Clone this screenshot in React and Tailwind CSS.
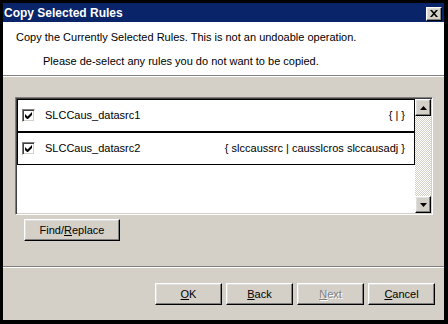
const raised =
  "border border-t-white border-l-white border-r-black border-b-black shadow-[inset_-1px_-1px_#808080,inset_1px_1px_#dfdfdf] bg-[#d4d0c8]";

const Btn = ({ children, disabled, className = "" }) => (
  <button
    className={`${raised} h-[22px] text-[11px] flex items-center justify-center ${
      disabled ? "text-[#808080] [text-shadow:1px_1px_#fff]" : "text-black"
    } ${className}`}
  >
    {children}
  </button>
);

const Check = () => (
  <span className="w-[13px] h-[13px] shrink-0 bg-white border border-t-[#808080] border-l-[#808080] border-r-white border-b-white shadow-[inset_1px_1px_#404040,inset_-1px_-1px_#d4d0c8] flex items-center justify-center">
    <svg width="7" height="7" viewBox="0 0 7 7">
      <path d="M0 2v3l2 2h1l4-4V0L2.5 4.5z" fill="#000" />
    </svg>
  </span>
);

const rules = [
  { name: "SLCCaus_datasrc1", expr: "{ | }" },
  { name: "SLCCaus_datasrc2", expr: "{ slccaussrc | causslcros slccausadj }" },
];

const Arrow = ({ up }) => (
  <span
    className={`${raised} h-[17px] w-full flex items-center justify-center shrink-0`}
  >
    <svg width="7" height="4" viewBox="0 0 7 4">
      <path d={up ? "M3.5 0L7 4H0z" : "M0 0h7L3.5 4z"} fill="#000" />
    </svg>
  </span>
);

export default function App() {
  return (
    <div className="w-[448px] h-[324px] bg-black pt-[3px] pl-[3px] pr-[4px] pb-[4px] flex flex-col font-['Liberation_Sans',Arial,sans-serif] text-[11px] text-black">
      {/* Title bar */}
      <div className="h-[19px] bg-[#0a246a] flex items-center justify-between pr-[2px] shrink-0">
        <span className="text-white font-bold text-[12px] pl-[1px] leading-none">
          Copy Selected Rules
        </span>
        <span className={`${raised} w-[16px] h-[14px] flex items-center justify-center mt-[2px]`}>
          <svg width="8" height="7" viewBox="0 0 8 7">
            <path d="M0 0h2l2 2.3L6 0h2L5 3.5 8 7H6L4 4.7 2 7H0l3-3.5z" fill="#000" />
          </svg>
        </span>
      </div>

      {/* Header */}
      <div className="h-[54px] bg-white shrink-0 pt-[9px] border-b border-[#808080]">
        <p className="pl-[13px] leading-[13px]">
          Copy the Currently Selected Rules. This is not an undoable operation.
        </p>
        <p className="pl-[40px] mt-[11px] leading-[13px]">
          Please de-select any rules you do not want to be copied.
        </p>
      </div>
      <div className="h-px bg-white shrink-0" />

      {/* Body */}
      <div className="flex-1 bg-[#d4d0c8] flex flex-col">
        <div className="ml-[12px] mr-[11px] mt-[20px] h-[118px] flex border border-t-[#808080] border-l-[#808080] border-r-white border-b-white shadow-[inset_1px_1px_#404040,inset_-1px_-1px_#d4d0c8] p-[1px] bg-white">
          <div className="flex-1 flex flex-col">
            {rules.map((r) => (
              <div
                key={r.name}
                className="h-[33px] border border-black flex items-center pl-[4px] pr-[9px]"
              >
                <Check />
                <span className="ml-[10px]">{r.name}</span>
                <span className="ml-auto">{r.expr}</span>
              </div>
            ))}
          </div>
          <div className="w-[16px] flex flex-col bg-[repeating-conic-gradient(#d4d0c8_0%_25%,#fff_0%_50%)] bg-[length:2px_2px]">
            <Arrow up />
            <div className="flex-1" />
            <Arrow />
          </div>
        </div>

        <Btn className="ml-[21px] mt-[4px] w-[96px]">
          Find/<span className="underline">R</span>eplace
        </Btn>

        <div className="mt-[25px] border-t border-[#808080] border-b border-b-white" />

        <div className="flex justify-end gap-[4px] mt-[15px] pr-[9px]">
          <Btn className="w-[67px]">
            <span className="underline">O</span>K
          </Btn>
          <Btn className="w-[67px]">
            <span className="underline">B</span>ack
          </Btn>
          <Btn className="w-[67px]" disabled>
            <span className="underline">N</span>ext
          </Btn>
          <Btn className="w-[67px]">
            <span className="underline">C</span>ancel
          </Btn>
        </div>
      </div>
    </div>
  );
}
